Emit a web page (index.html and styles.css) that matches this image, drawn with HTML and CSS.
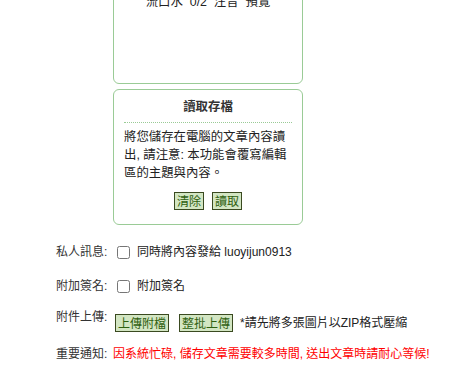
FILE: index.html
```html
<!DOCTYPE html>
<html lang="zh-Hant">
<head>
    <meta charset="UTF-8">
    <meta name="viewport" content="width=device-width, initial-scale=1.0">
    <title>發表文章</title>
    <link rel="stylesheet" href="styles.css">
</head>
<body>
    <div class="page">
        <!-- Tool box (top part scrolled out of view) -->
        <div class="panel panel-tools">
            <div class="tools-line">流口水 &nbsp;0/2 &nbsp;注音 &nbsp;預覽</div>
        </div>

        <!-- Load saved draft -->
        <div class="panel panel-load">
            <div class="panel-title">讀取存檔</div>
            <div class="panel-text">將您儲存在電腦的文章內容讀出, 請注意: 本功能會覆寫編輯區的主題與內容。</div>
            <div class="panel-buttons">
                <button class="green-button">清除</button>
                <button class="green-button">讀取</button>
            </div>
        </div>

        <div class="form-row row-private">
            <span class="row-label">私人訊息:</span>
            <span class="row-field">
                <input type="checkbox" class="check"> 同時將內容發給 luoyijun0913
            </span>
        </div>

        <div class="form-row row-sign">
            <span class="row-label">附加簽名:</span>
            <span class="row-field">
                <input type="checkbox" class="check"> 附加簽名
            </span>
        </div>

        <div class="form-row row-upload">
            <span class="row-label">附件上傳:</span>
            <span class="row-field upload-field">
                <button class="green-button">上傳附檔</button>
                <button class="green-button">整批上傳</button>
                <span class="upload-hint">*請先將多張圖片以ZIP格式壓縮</span>
            </span>
        </div>

        <div class="form-row row-notice">
            <span class="row-label">重要通知:</span>
            <span class="row-field notice">因系統忙碌, 儲存文章需要較多時間, 送出文章時請耐心等候!</span>
        </div>
    </div>
</body>
</html>
```

FILE: styles.css
```css
/* Page basics */
body {
    margin: 0;
    background: #fff;
    color: #222;
    font-family: "Liberation Sans", "Noto Sans CJK TC", sans-serif;
    font-size: 12px;
    overflow: hidden;
}
.page {
    padding-left: 56px;
}

/* Green rounded panels */
.panel {
    width: 188px;
    margin-left: 57px;
    border: 1px solid #9acb96;
    border-radius: 6px;
    box-sizing: content-box;
}
.panel-tools {
    margin-top: -30px;
    height: 112px;
}
.tools-line {
    padding-top: 22px;
    line-height: 18px;
    text-align: center;
    font-size: 12.4px;
    color: #222;
}
.panel-load {
    margin-top: 5px;
    padding: 8px 10px 14px;
    width: 168px;
}
.panel-title {
    line-height: 18px;
    text-align: center;
    font-weight: bold;
    font-size: 12.4px;
    color: #333;
    padding-bottom: 6px;
    border-bottom: 1px dotted #9acb96;
}
.panel-text {
    margin-top: 5px;
    line-height: 18px;
    font-size: 12.4px;
    color: #222;
}
.panel-buttons {
    margin-top: 10px;
    display: flex;
    justify-content: center;
    gap: 8px;
}

/* Green buttons */
.green-button {
    margin: 0;
    padding: 1px 2px;
    height: 18px;
    font-family: "Noto Sans CJK TC", sans-serif;
    font-size: 12px;
    line-height: 14px;
    color: #2f6010;
    background-color: #d3e6c3;
    border: 1px solid #3a4a20;
    border-radius: 0;
    cursor: pointer;
}
.green-button:hover {
    background-color: #c4dcb0;
}

/* Form rows */
.form-row {
    display: flex;
    align-items: center;
    line-height: 18px;
}
.row-label {
    width: 57px;
    flex: none;
    color: #333;
}
.row-field {
    display: flex;
    align-items: center;
    color: #222;
}
.check {
    width: 13px;
    height: 13px;
    margin: 0 7px 0 4px;
}
.row-private {
    margin-top: 18px;
}
.row-sign {
    margin-top: 16px;
}
.row-upload {
    margin-top: 13px;
    align-items: flex-start;
}
.upload-field {
    margin-top: 6px;
    margin-left: 2px;
}
.upload-field .green-button + .green-button {
    margin-left: 10px;
}
.upload-hint {
    margin-left: 7px;
}
.row-notice {
    margin-top: 13px;
}
.notice {
    color: #f00;
}
```
